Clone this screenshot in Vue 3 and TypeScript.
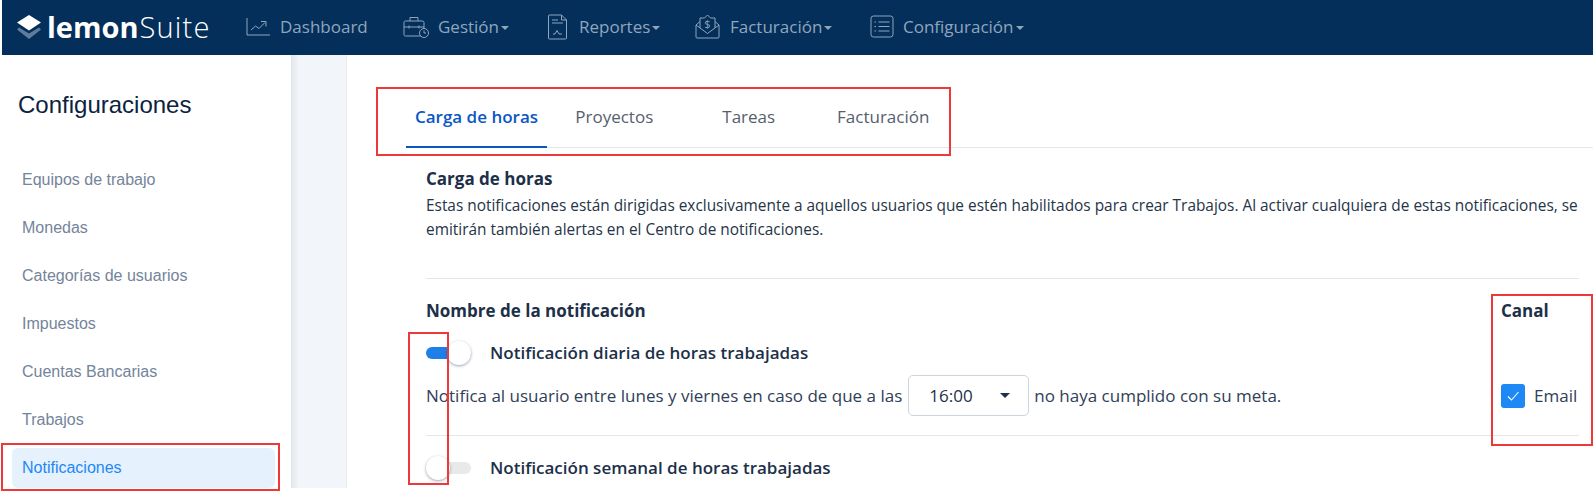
<script setup lang="ts">
const navItems = ['Equipos de trabajo', 'Monedas', 'Categorías de usuarios', 'Impuestos', 'Cuentas Bancarias', 'Trabajos', 'Notificaciones']
const tabs = ['Carga de horas', 'Proyectos', 'Tareas', 'Facturación']
</script>

<template>
  <div class="page">
    <header class="topbar">
      <div class="logo">
        <svg class="logo-mark" width="24" height="24" viewBox="0 0 24 24">
          <path d="M2 12.500 12 18.500 22 12.500 24 14.500 12 24 0 14.500z" fill="#5f7d9b" />
          <path d="M12 0 24 7.500 12 15.500 0 7.500z" fill="#fff" />
        </svg>
        <span class="logo-a">lemon</span><span class="logo-b">Suite</span>
      </div>
      <nav class="menu">
        <a class="menu-item m1">
          <svg width="25" height="19" viewBox="0 0 25 19" fill="none" stroke="#8fa6bd" stroke-width="1">
            <path d="M1 1v17h23" /><path d="M5 13l4.500-4 3.500 2.500 6-6" /><path d="M15 4.500h5v5" />
          </svg>
          <span>Dashboard</span>
        </a>
        <a class="menu-item m2">
          <svg width="27" height="24" viewBox="0 0 27 24" fill="none" stroke="#8fa6bd" stroke-width="1">
            <rect x="1" y="6" width="20" height="15" rx="1.500" /><path d="M7 6V2.500h8V6M1 12h20M6 10.500v3M16 10.500v3" />
            <circle cx="21" cy="18" r="4.500" fill="#042f5a" /><path d="M21 15.500V18h2" />
          </svg>
          <span>Gestión</span><i class="caret" />
        </a>
        <a class="menu-item m3">
          <svg width="20" height="26" viewBox="0 0 20 26" fill="none" stroke="#8fa6bd" stroke-width="1">
            <path d="M1.500 1h12l5 5v18a1 1 0 0 1-1 1h-16a1 1 0 0 1-1-1V2a1 1 0 0 1 1-1zM13.500 1v5h5" /><path d="M4 6h6M4 9h11M5 20h2l2-3.500 2 3.500h3" />
          </svg>
          <span>Reportes</span><i class="caret" />
        </a>
        <a class="menu-item m4">
          <svg width="25" height="25" viewBox="0 0 25 25" fill="none" stroke="#8fa6bd" stroke-width="1">
            <path d="M1 11 12.500 19.500 24 11v12a1 1 0 0 1-1 1H2a1 1 0 0 1-1-1zM1 11l4-3.500M24 11l-4-3.500" />
            <path d="M5 14V4h4.500l3-3 3 3H20v10" />
            <text x="12.500" y="13.500" font-size="11" fill="#8fa6bd" stroke="none" text-anchor="middle" font-family="Open Sans">$</text>
          </svg>
          <span>Facturación</span><i class="caret" />
        </a>
        <a class="menu-item m5">
          <svg width="24" height="23" viewBox="0 0 24 23" fill="none" stroke="#8fa6bd" stroke-width="1">
            <rect x="1" y="1" width="22" height="21" rx="2.500" /><path d="M8.500 7h11M8.500 11.500h11M8.500 16h11M4.500 7h1.500M4.500 11.500h1.500M4.500 16h1.500" />
          </svg>
          <span>Configuración</span><i class="caret" />
        </a>
      </nav>
    </header>

    <div class="body">
      <aside class="sidebar">
        <h2 class="side-title">Configuraciones</h2>
        <ul class="side-list">
          <li v-for="n in navItems" :key="n" :class="{ active: n === 'Notificaciones' }">{{ n }}</li>
        </ul>
      </aside>
      <div class="gutter" />
      <main class="main">
        <div class="tabs">
          <button v-for="(t, i) in tabs" :key="t" class="tab" :class="{ current: i === 0 }">{{ t }}</button>
        </div>
        <section class="content">
          <h3 class="h">Carga de horas</h3>
          <p class="desc">Estas notificaciones están dirigidas exclusivamente a aquellos usuarios que estén habilitados para crear Trabajos. Al activar cualquiera de estas notificaciones, se emitirán también alertas en el Centro de notificaciones.</p>
          <hr class="rule first" />
          <div class="head-row">
            <strong class="h">Nombre de la notificación</strong>
            <strong class="h canal">Canal</strong>
          </div>
          <div class="notif">
            <div class="notif-main">
              <div class="title-row top">
                <span class="toggle on"><i /></span>
                <strong class="h t">Notificación diaria de horas trabajadas</strong>
              </div>
              <div class="text-row">
                <span>Notifica al usuario entre lunes y viernes en caso de que a las</span>
                <span class="select">16:00<i class="sel-caret" /></span>
                <span>no haya cumplido con su meta.</span>
              </div>
            </div>
            <label class="check">
              <span class="box">
                <svg width="14" height="12" viewBox="0 0 14 12" fill="none" stroke="#fff" stroke-width="1.100"><path d="M2 6.500 5.500 10 12.500 2" /></svg>
              </span>
              Email
            </label>
          </div>
          <hr class="rule" />
          <div class="title-row">
            <span class="toggle"><i /></span>
            <strong class="h t">Notificación semanal de horas trabajadas</strong>
          </div>
        </section>
      </main>
    </div>

    <div class="mark mark-tabs" />
    <div class="mark mark-side" />
    <div class="mark mark-toggle" />
    <div class="mark mark-canal" />
  </div>
</template>

<style>
html, body { margin: 0; background: #fff; overflow: hidden; }
</style>

<style scoped>
.page { position: relative; width: 1593px; height: 492px; overflow: hidden; background: #fff; font-family: "Open Sans", sans-serif; color: #1d3049; }
.topbar { margin-left: 2px; height: 55px; box-sizing: border-box; padding-bottom: 2px; background: #042f5a; display: flex; align-items: center; }
.logo { display: flex; align-items: center; margin-left: 15px; width: 229px; color: #fff; font-size: 29px; line-height: 1; }
.logo-mark { margin-right: 6px; flex: none; }
.logo-a { font-weight: 700; }
.logo-b { font-weight: 300; letter-spacing: 1.200px; margin-left: 1px; }
.menu { display: flex; align-items: center; }
.menu-item { display: flex; align-items: center; color: #8fa6bd; font-size: 17px; }
.menu-item svg { margin-right: 9px; flex: none; }
.m1 { width: 157px; }
.m2 { width: 145px; }
.m2 svg { margin-right: 8px; }
.m3 { width: 147px; }
.m3 svg { margin-right: 11px; }
.m4 { width: 175px; }
.m4 svg { margin-right: 10px; }
.caret { width: 0; height: 0; border-left: 4px solid transparent; border-right: 4px solid transparent; border-top: 4px solid #8fa6bd; margin-left: 2px; margin-top: 2px; }
.body { display: flex; height: 433px; }
.sidebar { width: 291px; flex: none; box-sizing: border-box; padding: 0 16px 0 12px; }
.side-title { margin: 36px 0 0 6px; font: 400 24px/28px "Liberation Sans", sans-serif; color: #0c2340; }
.side-list { list-style: none; margin: 41px 0 0; padding: 0; font: 16px/20px "Liberation Sans", sans-serif; color: #74849a; }
.side-list li { height: 40px; line-height: 40px; padding-left: 10px; margin-bottom: 8px; border-radius: 6px; }
.side-list li.active { background: #e5f1fd; color: #1e88f5; }
.gutter { width: 56px; flex: none; background: linear-gradient(90deg, #e1e6ea 0, #f2f6fa 8px); border-right: 1px solid #ececec; box-sizing: border-box; }
.main { flex: 1; min-width: 0; padding-left: 59px; }
.tabs { display: flex; height: 93px; box-sizing: border-box; border-bottom: 1px solid #e4e6ea; align-items: flex-end; }
.tab { background: none; border: 0; border-bottom: 2px solid transparent; margin-bottom: -1px; height: 44px; padding: 0 0 17px; width: 134.500px; font: 400 17px/24px "Open Sans", sans-serif; color: #55606e; }
.tab.current { width: 141px; font-weight: 600; color: #0a57c4; border-bottom-color: #0a57c4; }
.content { padding: 19px 14px 0 20px; font-size: 15.400px; line-height: 23.500px; }
.h { font-size: 17px; font-weight: 700; line-height: 24px; color: #1d3049; margin: 0; }
.h.t { font-weight: 600; }
.desc { margin: 3px 0 0; font-size: 15.400px; line-height: 23.500px; color: #253447; }
.rule { border: 0; border-top: 1px solid #e4e6ea; margin: 0; }
.rule.first { margin-top: 37px; }
.head-row { display: flex; justify-content: space-between; margin-top: 20px; }
.canal { width: 78px; }
.notif { display: flex; justify-content: space-between; align-items: flex-end; }
.title-row { display: flex; align-items: center; gap: 19px; height: 32px; margin-top: 16px; }
.title-row.top { margin-top: 14px; }
.text-row { display: flex; align-items: center; gap: 4px; margin-top: 6px; margin-bottom: 19px; font-size: 17px; height: 41px; color: #2f4057; }
.toggle { position: relative; display: block; width: 45px; height: 12px; border-radius: 6px; background: #e9e9e9; flex: none; }
.toggle i { position: absolute; left: 0; top: -6px; width: 24px; height: 24px; border-radius: 50%; background: #fff; box-shadow: 0 1px 3px rgba(30,50,80,.45); }
.toggle.on { background: #1e7fe8; }
.toggle.on i { left: 21px; }
.select { display: flex; align-items: center; box-sizing: border-box; width: 121px; height: 41px; border: 1px solid #ccd4de; border-radius: 5px; padding-left: 20px; margin: 0 1px 0 2px; color: #1d3049; position: relative; }
.sel-caret { position: absolute; right: 18px; top: 17px; border-left: 5px solid transparent; border-right: 5px solid transparent; border-top: 5px solid #1d3049; }
.check { display: flex; align-items: center; gap: 9px; font-size: 17px; color: #2f4057; width: 78px; height: 41px; margin-bottom: 19px; }
.box { display: flex; align-items: center; justify-content: center; width: 24px; height: 24px; border-radius: 3px; background: #1e88f5; flex: none; }
.mark { position: absolute; box-sizing: border-box; border: 2px solid #ec3a3a; pointer-events: none; }
.mark-tabs { left: 376px; top: 87px; width: 575px; height: 69px; }
.mark-side { left: 1px; top: 443px; width: 279px; height: 48px; }
.mark-toggle { left: 408px; top: 332px; width: 41px; height: 153px; }
.mark-canal { left: 1491px; top: 294px; width: 102px; height: 152px; }
</style>
